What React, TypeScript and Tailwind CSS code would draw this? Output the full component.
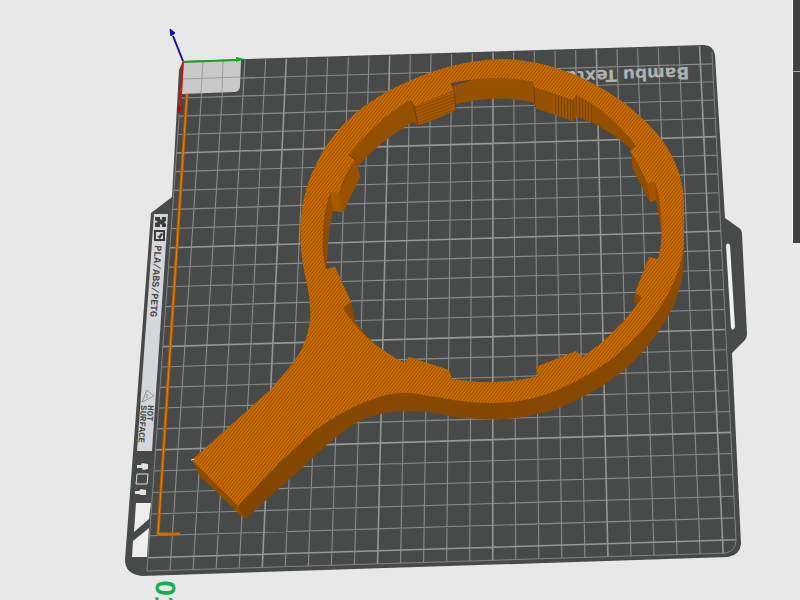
type Point = [number, number];

// Printable area in centimetres, one grid cell per centimetre
const BED_SIZE = 25.6;

// Screen corners of the bed: origin, end of Y, far corner, end of X
const CORNERS: Point[] = [
  [183, 62],
  [712, 46],
  [737, 553],
  [147, 571],
];

const project = (y: number, x: number): Point => {
  const [[x0, y0], [x1, y1], [x2, y2], [x3, y3]] = CORNERS;
  const u = y / BED_SIZE;
  const v = x / BED_SIZE;
  const dx1 = x1 - x2;
  const dx2 = x3 - x2;
  const dx3 = x0 - x1 + x2 - x3;
  const dy1 = y1 - y2;
  const dy2 = y3 - y2;
  const dy3 = y0 - y1 + y2 - y3;
  const det = dx1 * dy2 - dx2 * dy1;
  const g = (dx3 * dy2 - dx2 * dy3) / det;
  const h = (dx1 * dy3 - dx3 * dy1) / det;
  const w = g * u + h * v + 1;

  return [
    ((x1 - x0 + g * x1) * u + (x3 - x0 + h * x3) * v + x0) / w,
    ((y1 - y0 + g * y1) * u + (y3 - y0 + h * y3) * v + y0) / w,
  ];
};

const segment = (from: Point, to: Point) =>
  `M${from[0].toFixed(2)} ${from[1].toFixed(2)}L${to[0].toFixed(2)} ${to[1].toFixed(2)}`;

const steps = Array.from({ length: 26 }, (_, i) => i);

const gridPath = (indexes: number[]) =>
  indexes
    .map(
      (i) =>
        segment(project(i, 0), project(i, BED_SIZE)) +
        segment(project(0, i), project(BED_SIZE, i))
    )
    .join("");

const thinGrid = gridPath(steps.filter((i) => i % 5 !== 0));
const boldGrid = gridPath(steps.filter((i) => i % 5 === 0 && i > 0));

const TOP_OUTER =
  "M301 217C303 198 308 180 315 167C323 148 335 132 350 118C366 103 386 91 407 82C435 69 467 60 500 59C526 59 550 65 573 74C592 82 609 92 623 102C641 116 656 130 667 147C677 164 684 182 684 205L684 240C684 260 672 290 663 303C650 323 633 342 613 358C595 371 573 384 550 393C531 400 510 403 490 403C465 403 444 398 423 395C403 391 388 394 376 398C357 404 334 416 313 432L280 462L238 506L192 460L270 390L283 375C294 363 306 347 309 326C314 305 304 275 303 263C300 247 300 232 301 217Z";

const TOP_INNER =
  "M323 236C323 221 326 205 330 192L339 193C342 182 348 170 355 160L349 155C364 135 387 113 410 100L414 106L437 97L454 90L451 83C474 78 507 75 533 82L534 87L553 93L573 100L576 95C601 107 620 125 636 146L630 151C638 162 643 174 647 183L655 182C661 198 665 238 658 259L649 257L635 293L642 297C627 319 607 341 582 357L576 351L536 367L538 376C512 383 480 384 452 379L449 370L409 357L405 363C378 350 356 330 343 308L351 302L335 267L326 269C323 258 322 248 323 236Z";

const SIDE_OUTER =
  "M303 217L350 122L500 70L623 104L682 205L684 240L684 257C684 278 678 296 673 307C661 330 648 347 633 362C616 378 595 391 573 402C550 412 525 419 500 419C480 420 460 418 445 415C425 411 401 409 380 414C361 418 346 428 330 442L303 467L245 519L223 498L200 476L192 460L285 380L314 340L314 310Z";

const SIDE_INNER =
  "M326 269L328 250C328 235 330 223 333 211L343 212L360 177L358 166C373 149 392 134 413 122L418 125L437 119L456 110L456 104C482 98 510 96 535 103L535 108L573 121L577 116C598 124 617 136 632 150L632 167L647 197L650 202L656 200L662 235C662 244 661 252 658 259L649 257L635 293L634 303L638 303C625 322 606 342 582 357L576 351L536 367L538 376C512 383 480 384 452 379L449 370L409 357L405 363C384 353 368 340 355 321L351 302L335 267Z";

const Plate = () => (
  <g>
    <path
      d="M183 61L704 45Q713 45 715 55L725 218L739 228Q742 230 742 234L747 334Q747 338 744 341L732 353L741 544Q740 555 728 557L142 576Q125 574 125 560L151 213L172 197L179 70Z"
      fill="#484a49"
    />
    <path
      d="M726 245Q728 242 730 245L735 327Q733 332 731 328Z"
      fill="#f2f2f2"
    />
    <path d="M154 214L168 214L152 451L137 451Z" fill="#d5d6d9" />
    <path
      d="M136 503L151 503L149 519L134 532ZM133 541L149 528L147 557L132 557Z"
      fill="#eeeeee"
    />
    <path d={thinGrid} fill="none" stroke="#8a8c8b" strokeWidth="1.1" />
    <path d={boldGrid} fill="none" stroke="#969897" strokeWidth="1.6" />
    <path
      d="M183 62L147 571L726 553Q736 551 736 540L712 52"
      fill="none"
      stroke="#828483"
      strokeWidth="1"
    />
  </g>
);

const PlateLabels = () => (
  <g
    fontFamily="'Liberation Mono', monospace"
    fontWeight="bold"
    fill="#48494b"
  >
    <text
      transform="translate(689 67) rotate(178)"
      fontSize="17"
      fontFamily="'DejaVu Sans', sans-serif"
      fill="#b0b2b2"
    >
      Bambu Textured
    </text>
    <text transform="translate(155 245) rotate(94)" fontSize="10">
      PLA/ABS/PETG
    </text>
    <text transform="translate(148 405) rotate(94)" fontSize="9">
      HOT
    </text>
    <text transform="translate(141 405) rotate(94)" fontSize="9">
      SURFACE
    </text>
    <text
      transform="translate(156 580) rotate(92)"
      fontSize="28"
      fontFamily="'Liberation Sans', sans-serif"
      fill="#10b04b"
    >
      01
    </text>
    <g fill="#3a3c3d">
      <path d="M155 217H160V219L162 220V217H166V221L164 222L166 224V227H162V225L160 224V227H155V223L158 222L155 220Z" />
      <path d="M154 230H165V241H154ZM156 232V239H163V232Z" fillRule="evenodd" />
      <path d="M157 236L160 239L163 234L161 233L159 236Z" />
    </g>
    <path
      d="M147 390L154 396L142 402ZM147 394V398"
      fill="none"
      stroke="#8d8f91"
      strokeWidth="1"
    />
    <g fill="#e2e3e3">
      <path d="M137 465L141 465L142 463L148 464L148 469L143 470L142 468L137 468Z" />
      <path d="M135 491L139 491L141 489L146 490L146 495L141 495L139 494L135 494Z" />
    </g>
    <path
      d="M137 474H148L147 484H136Z"
      fill="none"
      stroke="#e2e3e3"
      strokeWidth="1"
    />
  </g>
);

const Axes = () => (
  <g>
    <path d="M183 62L241 60L240 87Q239 92 234 92L182 94Z" fill="#c9c9c9" />
    <path
      d="M203 62L201 93M223 61L222 92M183 79L240 77"
      stroke="#9b9c9c"
      strokeWidth="1"
    />
    <path
      d="M187 94L158 534L180 534"
      fill="none"
      stroke="#b35d00"
      strokeWidth="3"
    />
    <path
      d="M187 94L158 534L180 534"
      fill="none"
      stroke="#ef8200"
      strokeWidth="1"
    />
    <path d="M183 61L173 36" stroke="#14147e" strokeWidth="2" />
    <path d="M170 29L175 33L171 36Z" fill="#0b0ba8" stroke="#0b0ba8" />
    <path d="M183 62L237 60" stroke="#13a61b" strokeWidth="2" />
    <path d="M236 57L245 59L236 62Z" fill="#12b51a" />
    <path d="M183 62L180 108" stroke="#c91518" strokeWidth="2" />
    <path d="M177 106L182 107L179 115Z" fill="#b30d10" />
  </g>
);

const Model = () => (
  <g>
    <path d={SIDE_OUTER + SIDE_INNER} fill="url(#side)" fillRule="evenodd" />
    <path d="M192 460L238 506L245 519L200 476Z" fill="#8f4d00" />
    <path d="M414 106L454 90L456 110L418 125Z" fill="url(#layers)" />
    <path d="M553 93L573 100L573 121L553 114Z" fill="url(#ribs)" />
    <path d="M576 95L592 104L592 123L577 116Z" fill="url(#ribs)" />
    <path d="M339 193L355 160L360 177L343 212Z" fill="#985200" />
    <path d="M330 192L339 193L343 212L333 211Z" fill="#a65900" />
    <path d="M647 183L655 182L656 200L650 202Z" fill="#a05600" />
    <path d={TOP_OUTER + TOP_INNER} fill="url(#infill)" fillRule="evenodd" />
    <path
      d="M410 100L414 106L418 125M451 83L454 90L456 110M534 87L535 108M573 100L573 121M349 155L355 160"
      fill="none"
      stroke="#704000"
      strokeWidth="1"
    />
    <path d="M191 460L194 459" stroke="#ffd9a0" strokeWidth="1" />
  </g>
);

const Scene = () => (
  <svg
    viewBox="0 0 800 600"
    preserveAspectRatio="xMidYMid slice"
    className="block h-full w-full"
    role="img"
    aria-label="Build plate"
  >
    <defs>
      <pattern
        id="infill"
        width="2.6"
        height="2.6"
        patternUnits="userSpaceOnUse"
        patternTransform="rotate(-52)"
      >
        <rect width="3" height="3" fill="#d67100" />
        <rect width="3" height="1.2" fill="#9a5200" />
      </pattern>
      <pattern
        id="layers"
        width="3"
        height="3"
        patternUnits="userSpaceOnUse"
        patternTransform="rotate(-20)"
      >
        <rect width="3" height="3" fill="#a65a00" />
        <rect width="3" height="1" fill="#8a4a00" />
      </pattern>
      <pattern id="ribs" width="3" height="3" patternUnits="userSpaceOnUse">
        <rect width="3" height="3" fill="#9c5400" />
        <rect width="1" height="3" fill="#7f4500" />
      </pattern>
      <linearGradient id="side" x1="0" y1="0" x2="0" y2="1">
        <stop offset="0" stopColor="#985200" />
        <stop offset="0.5" stopColor="#8a4a00" />
        <stop offset="1" stopColor="#824600" />
      </linearGradient>
    </defs>
    <Plate />
    <PlateLabels />
    <Axes />
    <Model />
  </svg>
);

export default function App() {
  return (
    <main className="relative h-screen w-full overflow-hidden bg-[#e8e8e8]">
      <Scene />
      <aside className="absolute top-0 right-0 flex h-[243px] w-2 flex-col border-l border-white bg-[#424242]">
        <div className="h-[72px] border-b border-[#b0b0b0]" />
      </aside>
    </main>
  );
}
